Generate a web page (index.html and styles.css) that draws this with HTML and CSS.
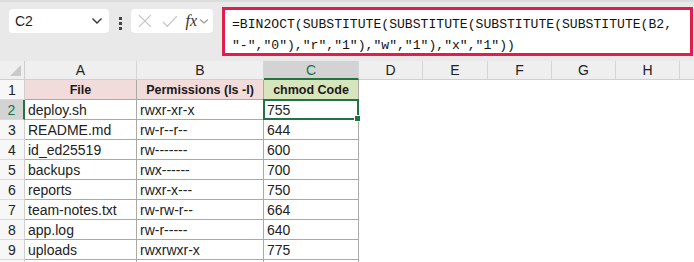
FILE: index.html
```html
<!DOCTYPE html>
<html lang="en">
<head>
    <meta charset="UTF-8">
    <title>chmod sheet</title>
    <link rel="stylesheet" href="styles.css">
</head>
<body>
    <div class="toolbar">
        <div class="name-box">
            <span>C2</span>
            <svg class="chev" width="12" height="8" viewBox="0 0 12 8"><path d="M1.5 1.5 L6 6 L10.5 1.5" fill="none" stroke="#333" stroke-width="1.4"/></svg>
        </div>
        <div class="dots"><i></i><i></i><i></i></div>
        <div class="fx-box">
            <svg width="14" height="14" viewBox="0 0 14 14"><path d="M1 1 L13 13 M13 1 L1 13" stroke="#c4c4c4" stroke-width="1.3"/></svg>
            <svg width="16" height="14" viewBox="0 0 16 14"><path d="M1 8 L5.5 12.5 L15 2" fill="none" stroke="#c4c4c4" stroke-width="1.3"/></svg>
            <span class="fx">fx</span>
            <svg width="10" height="7" viewBox="0 0 10 7"><path d="M1 1.5 L5 5 L9 1.5" fill="none" stroke="#9a9a9a" stroke-width="1.2"/></svg>
        </div>
        <div class="formula">=BIN2OCT(SUBSTITUTE(SUBSTITUTE(SUBSTITUTE(SUBSTITUTE(B2,<br>"-","0"),"r","1"),"w","1"),"x","1"))</div>
    </div>

    <div class="sheet">
        <div class="corner"><span class="tri"></span></div>
        <div class="col-head">A</div>
        <div class="col-head">B</div>
        <div class="col-head active">C</div>
        <div class="col-head">D</div>
        <div class="col-head">E</div>
        <div class="col-head">F</div>
        <div class="col-head">G</div>
        <div class="col-head">H</div>
        <div class="col-head last"></div>

        <div class="row-head">1</div>
        <div class="cell head pink">File</div>
        <div class="cell head pink">Permissions (ls -l)</div>
        <div class="cell head green">chmod Code</div>
        <div class="blank"></div><div class="blank"></div><div class="blank"></div><div class="blank"></div><div class="blank"></div><div class="blank"></div>

        <div class="row-head active">2</div>
        <div class="cell">deploy.sh</div>
        <div class="cell">rwxr-xr-x</div>
        <div class="cell selected">755</div>
        <div class="blank"></div><div class="blank"></div><div class="blank"></div><div class="blank"></div><div class="blank"></div><div class="blank"></div>

        <div class="row-head">3</div>
        <div class="cell">README.md</div>
        <div class="cell">rw-r--r--</div>
        <div class="cell">644</div>
        <div class="blank"></div><div class="blank"></div><div class="blank"></div><div class="blank"></div><div class="blank"></div><div class="blank"></div>

        <div class="row-head">4</div>
        <div class="cell">id_ed25519</div>
        <div class="cell">rw-------</div>
        <div class="cell">600</div>
        <div class="blank"></div><div class="blank"></div><div class="blank"></div><div class="blank"></div><div class="blank"></div><div class="blank"></div>

        <div class="row-head">5</div>
        <div class="cell">backups</div>
        <div class="cell">rwx------</div>
        <div class="cell">700</div>
        <div class="blank"></div><div class="blank"></div><div class="blank"></div><div class="blank"></div><div class="blank"></div><div class="blank"></div>

        <div class="row-head">6</div>
        <div class="cell">reports</div>
        <div class="cell">rwxr-x---</div>
        <div class="cell">750</div>
        <div class="blank"></div><div class="blank"></div><div class="blank"></div><div class="blank"></div><div class="blank"></div><div class="blank"></div>

        <div class="row-head">7</div>
        <div class="cell">team-notes.txt</div>
        <div class="cell">rw-rw-r--</div>
        <div class="cell">664</div>
        <div class="blank"></div><div class="blank"></div><div class="blank"></div><div class="blank"></div><div class="blank"></div><div class="blank"></div>

        <div class="row-head">8</div>
        <div class="cell">app.log</div>
        <div class="cell">rw-r-----</div>
        <div class="cell">640</div>
        <div class="blank"></div><div class="blank"></div><div class="blank"></div><div class="blank"></div><div class="blank"></div><div class="blank"></div>

        <div class="row-head">9</div>
        <div class="cell">uploads</div>
        <div class="cell">rwxrwxr-x</div>
        <div class="cell">775</div>
        <div class="blank"></div><div class="blank"></div><div class="blank"></div><div class="blank"></div><div class="blank"></div><div class="blank"></div>

        <div class="row-head stub"></div>
        <div class="cell stub"></div>
        <div class="cell stub"></div>
        <div class="cell stub"></div>
    </div>
</body>
</html>
```
FILE: styles.css
```css
* {
    box-sizing: border-box;
}
body {
    margin: 0;
    width: 694px;
    background: #fff;
    font-family: "Liberation Sans", Arial, sans-serif;
    color: #222;
}

/* formula bar */
.toolbar {
    display: flex;
    align-items: flex-start;
    height: 61px;
    padding: 5px 1px 0 9px;
    background: #e9e9e9;
    border-top: 2px solid #dcdcdc;
}
.name-box {
    display: flex;
    align-items: center;
    justify-content: space-between;
    width: 100px;
    height: 24px;
    margin-top: 2px;
    padding: 0 6px 0 6px;
    background: #fff;
    border-radius: 4px;
    font-size: 14px;
    color: #1f1f1f;
}
.dots {
    display: flex;
    flex-direction: column;
    gap: 2px;
    width: 22px;
    margin-top: 10px;
    align-items: center;
}
.dots i {
    display: block;
    width: 3px;
    height: 3px;
    background: #444;
}
.fx-box {
    display: flex;
    align-items: center;
    gap: 10px;
    width: 82px;
    height: 24px;
    margin-top: 2px;
    padding: 0 4px 0 7px;
    background: #fff;
    border-radius: 4px;
}
.fx-box .fx {
    font-family: "Liberation Serif", "Times New Roman", serif;
    font-style: italic;
    font-size: 16px;
    color: #333;
    margin-left: -2px;
    margin-right: -8px;
}
.formula {
    flex: 1;
    height: 49px;
    margin-left: 9px;
    padding: 4px 0 0 7px;
    background: #fff;
    border: 3px solid #e11d4c;
    font-family: "Liberation Mono", "Courier New", monospace;
    font-size: 13.1px;
    line-height: 21px;
    color: #111;
    white-space: nowrap;
}

/* grid */
.sheet {
    display: grid;
    grid-template-columns: 25px 112px 127px 95px 64px 65px 64px 64px 64px 30px;
    grid-template-rows: 19px repeat(9, 20px) 2px;
}
.corner {
    position: relative;
    background: #efefef;
    border-right: 1px solid #cfcfcf;
    border-bottom: 1px solid #cfcfcf;
}
.corner .tri {
    position: absolute;
    right: 3px;
    bottom: 3px;
    width: 0;
    height: 0;
    border-left: 11px solid transparent;
    border-bottom: 11px solid #c9c9c9;
}
.col-head {
    background: #efefef;
    border-right: 1px solid #d6d6d6;
    border-bottom: 1px solid #cfcfcf;
    text-align: center;
    font-size: 14px;
    line-height: 18px;
    color: #222;
}
.col-head.active {
    background: #d3d3d3;
    color: #217346;
    border-bottom: 2px solid #217346;
}
.row-head {
    background: #f7f7f7;
    border-right: 1px solid #cfcfcf;
    border-bottom: 1px solid #dadada;
    text-align: center;
    font-size: 14px;
    line-height: 20px;
    color: #222;
}
.row-head.active {
    background: #d3d3d3;
    color: #217346;
    border-right: 2px solid #217346;
}
.cell {
    position: relative;
    padding-left: 3px;
    border-right: 1px solid #a9a9a9;
    border-bottom: 1px solid #a9a9a9;
    font-size: 14px;
    line-height: 21px;
    white-space: nowrap;
}
.stub {
    border-bottom: none;
}
.cell.head {
    text-align: center;
    padding-left: 0;
    font-weight: bold;
    font-size: 12.5px;
    line-height: 20px;
    color: #1a1a1a;
}
.pink {
    background: #f2dcdb;
}
.green {
    background: #d8e4bc;
}
.blank {
    background: #fff;
}

/* active cell */
.selected::after {
    content: "";
    position: absolute;
    left: -1px;
    top: -1px;
    right: -1px;
    bottom: -1px;
    border: 2px solid #217346;
}
.selected::before {
    content: "";
    position: absolute;
    right: -3px;
    bottom: -3px;
    width: 5px;
    height: 5px;
    background: #217346;
    border: 1px solid #fff;
    z-index: 1;
}
```
